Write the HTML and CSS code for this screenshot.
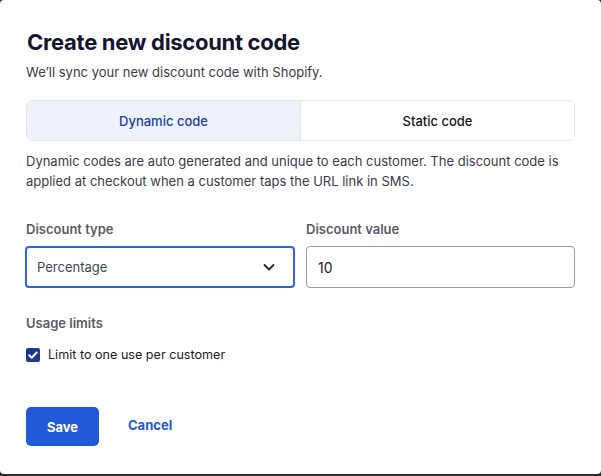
FILE: index.html
```html
<!DOCTYPE html>
<html>
<head>
<meta charset="utf-8">
<link rel="stylesheet" href="styles.css">
</head>
<body>
<div class="modal">
  <h1 class="title">Create new discount code</h1>
  <p class="subtitle">We’ll sync your new discount code with Shopify.</p>
  <div class="tabs">
    <div class="tab active">Dynamic code</div>
    <div class="tab">Static code</div>
  </div>
  <p class="desc">Dynamic codes are auto generated and unique to each customer. The discount code is applied at checkout when a customer taps the URL link in SMS.</p>
  <div class="fields">
    <div class="field">
      <div class="label">Discount type</div>
      <div class="select">
        <span>Percentage</span>
        <svg width="14" height="14" viewBox="0 0 14 14"><path d="M2.5 5l4.5 4.5L11.5 5" fill="none" stroke="#1f2430" stroke-width="1.8" stroke-linecap="round" stroke-linejoin="round"/></svg>
      </div>
    </div>
    <div class="field">
      <div class="label">Discount value</div>
      <div class="input">10</div>
    </div>
  </div>
  <div class="label usage">Usage limits</div>
  <div class="check-row">
    <span class="checkbox"><svg width="14" height="14" viewBox="0 0 14 14"><path d="M3.2 7.2l2.5 2.5 5-5.2" fill="none" stroke="#fff" stroke-width="2" stroke-linecap="round" stroke-linejoin="round"/></svg></span>
    <span class="check-label">Limit to one use per customer</span>
  </div>
  <div class="actions">
    <button class="btn-save">Save</button>
    <button class="btn-cancel">Cancel</button>
  </div>
</div>
</body>
</html>
```
FILE: styles.css
```css
html, body {
  margin: 0;
  padding: 0;
}
body {
  background: #2b2b2b;
  width: 601px;
  height: 476px;
  font-family: Inter, "Noto Sans", sans-serif;
  -webkit-font-smoothing: antialiased;
}
.modal {
  background: #fff;
  height: 474px;
  box-sizing: border-box;
  border-radius: 4px;
  padding: 28px 26px 0 26px;
}
.title {
  margin: 0 0 0 1px;
  font-size: 22px;
  line-height: 28px;
  font-weight: 700;
  color: #151632;
  letter-spacing: -0.3px;
}
.subtitle {
  margin: 7px 0 0 0;
  font-size: 13px;
  line-height: 18px;
  color: #3b3b48;
}
.tabs {
  margin-top: 19px;
  display: flex;
  height: 41px;
  border: 1px solid #e4e6ea;
  border-radius: 6px;
  overflow: hidden;
  box-sizing: border-box;
}
.tab {
  flex: 1;
  display: flex;
  align-items: center;
  justify-content: center;
  font-size: 13px;
  font-weight: 500;
  color: #14151c;
  background: #fff;
}
.tab.active {
  background: #edf2fc;
  color: #1c3f9e;
  border-right: 1px solid #e4e6ea;
}
.desc {
  margin: 10px 0 0 0;
  font-size: 13px;
  line-height: 20px;
  color: #3b3b48;
}
.fields {
  margin-top: 29px;
  display: flex;
  gap: 11px;
}
.field {
  flex: 1;
  display: flex;
  flex-direction: column;
}
.label {
  font-size: 13px;
  line-height: 18px;
  font-weight: 600;
  color: #5b5b68;
}
.select, .input {
  margin-top: 8px;
  height: 42px;
  box-sizing: border-box;
  border-radius: 4px;
  display: flex;
  align-items: center;
  font-size: 14px;
}
.select {
  border: 2px solid #2f63e0;
  padding: 0 17px 0 10px;
  justify-content: space-between;
  color: #3a4a5f;
  font-size: 13px;
  margin-left: -1px;
}
.select svg {
  display: block;
}
.input {
  border: 1px solid #9a9aa4;
  padding: 0 11px;
  color: #1a1a22;
  font-size: 14px;
}
.usage {
  margin-top: 26px;
}
.check-row {
  margin-top: 14px;
  display: flex;
  align-items: center;
  gap: 8px;
}
.checkbox {
  width: 14px;
  height: 14px;
  border-radius: 2px;
  background: #1b3990;
  display: flex;
  align-items: center;
  justify-content: center;
}
.checkbox svg { display: block; }
.check-label {
  font-size: 12.6px;
  color: #1c1c26;
  line-height: 18px;
}
.actions {
  margin-top: 43px;
  display: flex;
  align-items: center;
  gap: 29px;
}
.btn-save {
  width: 73px;
  height: 39px;
  border: none;
  border-radius: 5px;
  background: #215ad9;
  color: #fff;
  font-family: inherit;
  font-size: 13px;
  font-weight: 700;
  cursor: pointer;
}
.btn-cancel {
  border: none;
  background: none;
  padding: 0;
  margin-bottom: 3px;
  color: #1e5ad6;
  font-family: inherit;
  font-size: 13px;
  font-weight: 700;
  cursor: pointer;
}
```
